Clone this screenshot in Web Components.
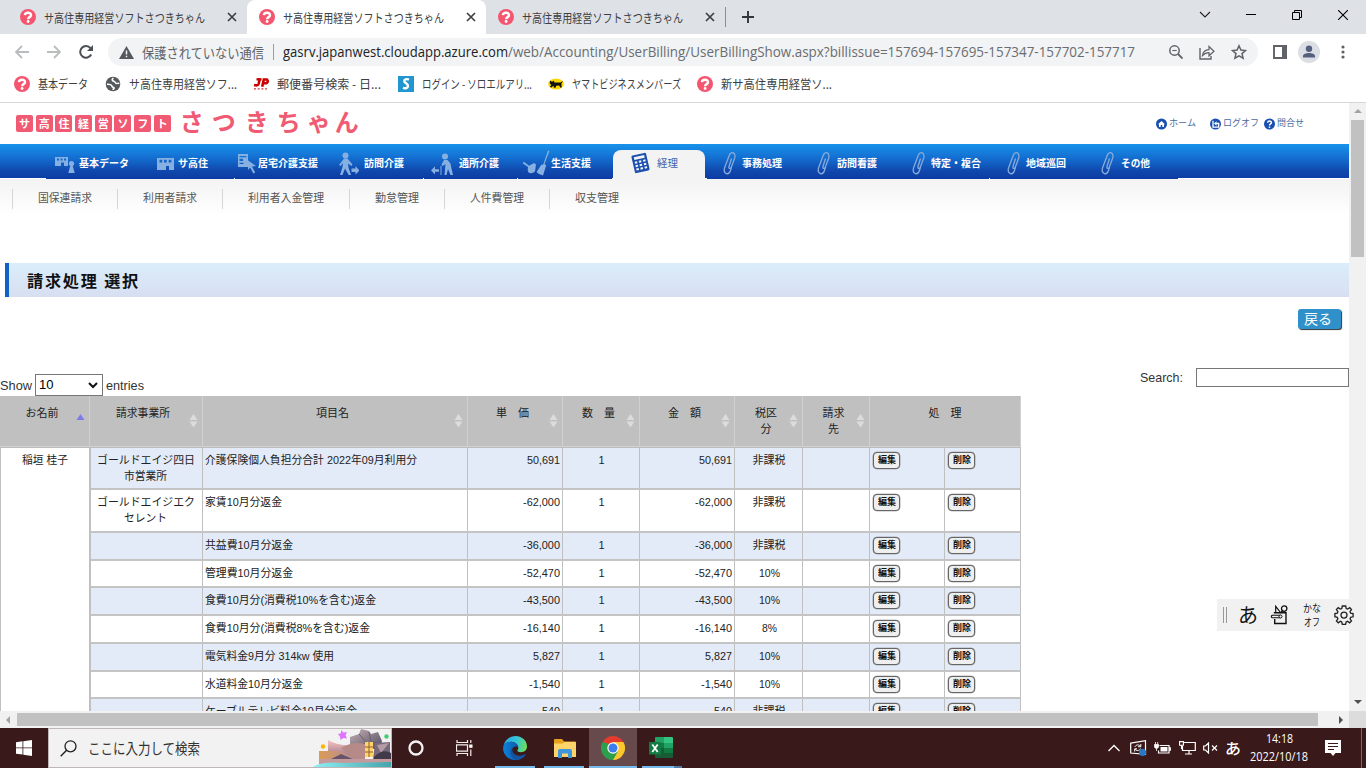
<!DOCTYPE html>
<html lang="ja">
<head>
<meta charset="utf-8">
<title>サ高住専用経営ソフトさつきちゃん</title>
<style>
html,body{margin:0;padding:0;width:1366px;height:768px;overflow:hidden;background:#fff}
body{font-family:"Liberation Sans","Noto Sans CJK JP",sans-serif;font-size:12px;color:#333}
</style>
</head>
<body>
<desktop-screen></desktop-screen>
<script>
const ICONS = {
  fav: ['0 0 16 16', '<circle cx="8" cy="8" r="8" fill="#f4566f"/><path d="M4.900 6.200C5.200 2.700 11.300 3 11 6.400C10.800 8.300 8.100 8 8.100 10.200" fill="none" stroke="#fff" stroke-width="2.400"/><circle cx="8.100" cy="12.500" r="1.400" fill="#fff"/>'],
  close: ['0 0 10 10', '<path d="M1 1l8 8M9 1l-8 8" stroke="#3c4043" stroke-width="1.700" fill="none"/>'],
  plus: ['0 0 12 12', '<path d="M6 0v12M0 6h12" stroke="#333639" stroke-width="1.900"/>'],
  chevdown: ['0 0 12 8', '<path d="M1 1l5 5 5-5" stroke="#222" fill="none" stroke-width="1.100"/>'],
  min: ['0 0 10 10', '<path d="M0 4.500h10" stroke="#000"/>'],
  restore: ['0 0 10 10', '<path d="M.5 2.500h7v7h-7zM2.500 2.500v-2h7v7h-2" stroke="#000" fill="none"/>'],
  winclose: ['0 0 10 10', '<path d="M0 0l10 10M10 0L0 10" stroke="#000" fill="none" stroke-width="1.100"/>'],
  back: ['0 0 14 14', '<path d="M14 7H1.500M7 1L1 7l6 6" stroke="#babcbe" stroke-width="1.800" fill="none"/>'],
  fwd: ['0 0 14 14', '<path d="M0 7h12.500M7 1l6 6-6 6" stroke="#babcbe" stroke-width="1.800" fill="none"/>'],
  reload: ['0 0 14 14', '<path d="M12.200 9.500A5.800 5.800 0 1 1 11.500 3.200" stroke="#4c5054" stroke-width="2" fill="none"/><path d="M14 0v6H8z" fill="#4c5054"/>'],
  warn: ['0 0 15 13', '<path d="M7.500 0L15 13H0z" fill="#55585c"/><path d="M7.500 4.500v4M7.500 9.700v1.600" stroke="#f1f3f4" stroke-width="1.500"/>'],
  zoomout: ['0 0 14 14', '<circle cx="5.500" cy="5.500" r="4.700" fill="none" stroke="#5f6368" stroke-width="1.500"/><path d="M9 9l4.500 4.500" stroke="#5f6368" stroke-width="1.900"/><path d="M3.300 5.500h4.400" stroke="#5f6368" stroke-width="1.100"/>'],
  share: ['0 0 16 15', '<path d="M1 3v11h11v-3" fill="none" stroke="#5f6368" stroke-width="1.400"/><path d="M3.500 10.500C4 6.800 6.500 4.900 10 4.700V1.500l5 4.700-5 4.600V7.700C7 7.700 5.300 8.500 3.500 10.500z" fill="none" stroke="#5f6368" stroke-width="1.200"/>'],
  star: ['0 0 16 16', '<path d="M8 1.800l1.900 4.300 4.600.4-3.500 3.100 1.100 4.600L8 11.800l-4.100 2.400L5 9.600 1.500 6.500l4.600-.4z" fill="none" stroke="#5f6368" stroke-width="1.500"/>'],
  panel: ['0 0 14 14', '<path d="M1 1h12v12H1z" fill="none" stroke="#5f6368" stroke-width="1.900"/><path d="M9 0h5v14H9z" fill="#5f6368"/>'],
  avatar: ['0 0 22 22', '<circle cx="11" cy="11" r="11" fill="#dbdee4"/><circle cx="11" cy="7.800" r="3.200" fill="#55617c"/><path d="M5 16.500v-1.500c0-4 12-4 12 0v1.500z" fill="#55617c"/>'],
  dots: ['0 0 4 14', '<circle cx="2" cy="2" r="1.600" fill="#5f6368"/><circle cx="2" cy="7" r="1.600" fill="#5f6368"/><circle cx="2" cy="12" r="1.600" fill="#5f6368"/>'],
  globe: ['0 0 16 16', '<circle cx="8" cy="8" r="7.300" fill="#55595d"/><path d="M8.500 2.200c-2.500 1-1 3 .8 3.200 1.300.2.500 1.800 1.800 2 1 .2 1.900-.3 3.200 0" fill="none" stroke="#fff" stroke-width="1.500"/><path d="M1.900 8.300c2.500-.1 4.800.3 5 1.900.1 1.300 2.800.6 2 2.600l-1.400.8" fill="none" stroke="#fff" stroke-width="1.600"/>'],
  jp: ['0 0 16 12', '<g fill="none" stroke="#c00" stroke-width="2.600"><path d="M6.800 .8L5.600 6Q5 8 1 7"/><path d="M9.200 8.700l1.600-7.200h3.200q2 2.200-1 3.800h-3"/></g><path d="M3.500 1.300h5" stroke="#c00" stroke-width="2.400"/><path d="M1 10.900h13" stroke="#c00" stroke-dasharray="2 1.700"/>'],
  soro: ['0 0 16 16', '<path d="M0 0h16v16H0z" fill="#2196cf"/><path d="M11 3.700C8.500 2.500 6 3.300 6.300 5.300c.3 1.900 3.800 2.300 3.700 4.600-.1 2-2.500 3-5 2" fill="none" stroke="#fff" stroke-width="2.400"/>'],
  yamato: ['0 0 16 12', '<ellipse cx="8" cy="6" rx="7.800" ry="5.500" fill="#fcd800"/><path d="M2 2.500l1.300 1h1.500l1.200-1 .3 2h6.200l2.500-1.400-1.600 2.700.3 3.700h-1.500l-1-2-3 .2-.7 2H6l-.7-2L3.500 9.500 2 9l1.200-2.300L1.800 5.500z" fill="#111"/>'],
  home: ['0 0 11 12', '<circle cx="5.500" cy="6" r="5.500" fill="#184fb0"/><path d="M2 6.300L5.500 3 9 6.300H8v2.800H6.300V7H4.700v2.100H3V6.300z" fill="#fff"/>'],
  logoff: ['0 0 11 12', '<circle cx="5.500" cy="6" r="5.500" fill="#184fb0"/><path d="M3 2.800v6.400h5.700V5.500H6" stroke="#fff" fill="none" stroke-width="1.300"/><path d="M4 5.500L6.500 3.300v4.400z" fill="#fff"/>'],
  help: ['0 0 11 12', '<circle cx="5.500" cy="6" r="5.500" fill="#184fb0"/><path d="M3.600 4.700c.2-2.200 4-2.100 3.800 0C7.200 6 5.500 6 5.500 7.500" stroke="#fff" fill="none" stroke-width="1.500"/><path d="M5.500 8.500v1.400" stroke="#fff" stroke-width="1.500"/>'],
  n1: ['0 0 20 26', '<path fill-rule="evenodd" d="M0 7h13v9H9v-3.500H6V16H0zM2 8.500v2h2v-2zM5.500 8.500v2h2v-2zM9 8.500v2h2v-2z"/><circle cx="16.500" cy="13.500" r="2.600"/><path d="M15.500 15h2l2.200 8h-6.400z"/>'],
  n2: ['0 0 18 26', '<path fill-rule="evenodd" d="M0 8h17v12h-5v-4H9v4H0zM2.500 9.800v2.700h2.700V9.800zM7 9.800v2.700h2.700V9.800zM11.700 9.800v2.700h2.700V9.800z"/>'],
  n3: ['0 0 18 26', '<path fill-rule="evenodd" d="M0 4h10v13H0zM1.500 6v1.200h7V6zM1.500 8.700v2.300h3.500V8.700zM1.500 12.700v1.200h4v-1.200z"/><path d="M9.500 10l8.500 6-4 .4 3.200 6-1.900 1-3.100-6-2 2.600z"/>'],
  n4: ['0 0 20 26', '<circle cx="6.500" cy="5.500" r="3"/><path d="M5 8.500h3.500l5 6-1 1.500-3.500-2.500.5 4 2.500 7.500h-2.300L6 18.500 3.500 25H1l2.500-8 .3-4L1.500 16 0 15z"/><path d="M12.500 18.500h4V16l4 4.500-4 4V22h-4z"/>'],
  n5: ['0 0 22 26', '<circle cx="14" cy="6.500" r="3"/><path d="M13 10h3.500l3 3.500 1 5 1.500 6.500h-2.500l-2.500-6-1.500 6h-2l1-11-3 2-1-1.200z"/><path d="M10 16V25" stroke-width="1" stroke="#86b0e2"/><path d="M8 19.200H4V16.200L0 20.500l4 4.100v-2.800h4z"/>'],
  n6: ['0 0 27 26', '<path d="M25 .5l1.400.6L21.500 14l1.700 1.200L20 25.500q-4-.5-6.500-3.500l5-7.500 1.600.3z"/><path d="M0 12l1.500.3 4.700 3.400L11 13l2 1.500-1 7q-3.500 3.200-6.700.8Q4.300 19.500 5 17L0 13.500z"/>'],
  calc: ['0 0 19 22', '<g transform="rotate(-13 9.500 11)"><rect x="2" y="2" width="15" height="18" rx="1.500" fill="#1b4fae"/><path d="M4.200 4h10.600v2.800H4.200zM4 8.500h2.500v2H4zM8.200 8.500h2.500v2H8.200zM12.500 8.500H15v2h-2.500zM4 12h2.500v2H4zM8.200 12h2.500v2H8.200zM12.500 12H15v2h-2.500zM4 15.500h2.500v2H4zM8.200 15.500h2.500v2H8.200zM12.500 15.500H15v2h-2.500z" fill="#f3f3f3"/></g>'],
  clip: ['0 0 13 24', '<path d="M8.500 7.500L6 15.500c-.6 2.500 1.800 2.500 2.400.5l3.300-9C13 1 7.500-.5 6 5L1.500 17C0 23.500 6 24.500 7.500 19.500l1-3.500" fill="none" stroke="#86aadc" stroke-width="1.300"/>'],
  winlogo: ['0 0 16 16', '<path d="M0 2.200l6.500-.9v6.200H0zM7.300 1.200L16 0v7.500H7.300zM0 8.300h6.500v6.300L0 13.700zM7.300 8.300H16V16l-8.700-1.200z" fill="#fff"/>'],
  search: ['0 0 17 17', '<circle cx="10.500" cy="6.300" r="5.500" fill="none" stroke="#222" stroke-width="1.300"/><path d="M6.600 10.200L.7 16.200" stroke="#222" stroke-width="1.400"/>'],
  cortana: ['0 0 16 16', '<circle cx="8" cy="8" r="6.500" fill="none" stroke="#f5f0f0" stroke-width="2.300"/>'],
  taskview: ['0 0 17 16', '<path d="M1 0v2.500h10.500V0M1 16v-2.500h10.500V16M.5 4.800h11v6.400H.5z" fill="none" stroke="#f4eeee" stroke-width="1.200"/><path d="M14.800 0v3M14.800 9.500V16" stroke="#f4eeee" stroke-width="1.200"/><path d="M13.200 4.500h3.300v3.300h-3.300z" fill="#fff"/>'],
  edge: ['0 0 24 24', '<defs><linearGradient id="a" x1="0" x2="1" y1=".3" y2=".5"><stop stop-color="#2ba9e8"/><stop offset=".55" stop-color="#35c5d3"/><stop offset="1" stop-color="#6ce05b"/></linearGradient><linearGradient id="b" x1="0" x2="1"><stop stop-color="#0d82dc"/><stop offset="1" stop-color="#0b4695"/></linearGradient></defs><path d="M.5 10C2 3.500 7 0 12.500 0 19.500 0 24 5.200 24 10.500c0 3.500-2.500 5.700-6 5.700-3 0-4.300-1.100-3.300-2.500 2.300-3-1.700-8-6-8-4 0-7 1.800-8.200 4.300z" fill="url(#a)"/><path d="M.5 9.600C2 6.800 5 5.600 8.300 5.700c4 .1 6.600 3.300 6.600 6-.9-2-5.900-1.700-5.900 2.500 0 4.500 5.500 8.300 12.500 4.300.8-.4 1.300.1.800.8C19.700 23 15.500 24.400 11 24 4 23.200-1.300 16.700.5 9.600z" fill="url(#b)"/><path d="M9.600 11.300c-4.700 4.700-1.500 11.200 4.400 12.700 3.500-.3 6.700-2.200 8.500-4.900.3-.6-.2-.9-.8-.6C14.500 22 7.500 17.500 9.600 11.300z" fill="#14539e"/>'],
  folder: ['0 0 22 19', '<path d="M0 1q0-1 1-1h7l2 2.500h11q1 0 1 1V17H0z" fill="#e7a21c"/><path d="M0 4.500h8.500l2-1.500H21q1 0 1 1v14H0z" fill="#fcd469"/><path d="M4 19v-7q0-2 2-2h10q2 0 2 2v7h-4v-4.500H8V19z" fill="#3f96dc"/>'],
  chrome: ['0 0 24 24', '<path d="M12 12L1.600 6A12 12 0 0 1 22.400 6z" fill="#e33b2e"/><path d="M12 12L1.600 6A12 12 0 0 0 12 24l5.200-9z" fill="#2d9e4b"/><path d="M12 12l0 12A12 12 0 0 0 22.400 6H12z" fill="#fcc62d"/><path d="M7.400 15L1.600 6l6.500 2zM17.200 15L12 24l-1-7z" fill="#2d9e4b"/><circle cx="12" cy="12" r="5.700" fill="#fff"/><circle cx="12" cy="12" r="4.500" fill="#3b7ded"/>'],
  excel: ['0 0 24 22', '<path d="M6 1q0-1 1-1h8v6H6z" fill="#21a366"/><path d="M15 0h8q1 0 1 1v5h-9z" fill="#33c481"/><path d="M6 6h9v5H6z" fill="#107c41"/><path d="M15 6h9v5h-9z" fill="#21a366"/><path d="M6 11h9v5H6z" fill="#185c37"/><path d="M15 11h9v5h-9z" fill="#107c41"/><path d="M6 16h18v4q0 1-1 1H7q-1 0-1-1z" fill="#185c37"/><path d="M0 5h12v12.500H0z" fill="#107c41"/><path d="M3.300 7.500l5.400 7.500M8.700 7.500L3.300 15" stroke="#fff" stroke-width="1.800"/>'],
  tup: ['0 0 12 8', '<path d="M.5 7L6 1.500 11.500 7" fill="none" stroke="#fff" stroke-width="1.300"/>'],
  tsync: ['0 0 17 16', '<path d="M.7 3.200L15.500.7v13.600L.7 13z" fill="none" stroke="#fff" stroke-width="1.200"/><path d="M5 7c.5-2.500 4.500-2.800 5.500-.5M10.800 4v2.700H8M10.500 8.500c-.8 2.500-4.500 2.600-5.500.5M4.700 11.500V8.800H7" stroke="#fff" fill="none"/><circle cx="12.600" cy="12.300" r="3.600" fill="#2a77c4"/>'],
  tbat: ['0 0 17 12', '<path d="M5.500 3.500h9.500v7.500H4.500V8.500" fill="none" stroke="#fff" stroke-width="1.200"/><path d="M6.500 5h7v4.500h-7z" fill="#fff"/><path d="M15.500 5.500h1v3h-1zM.5 2.500h4v2.300q0 1.500-2 1.500t-2-1.500zM1.500 0v2.500M3.700 0v2.500M2.500 6v3" fill="#fff" stroke="#fff" stroke-width=".8"/>'],
  tnet: ['0 0 17 14', '<path d="M5 1.500h11.300v8H3.500V5M10 9.500v3.500M6 13h7" fill="none" stroke="#fff" stroke-width="1.200"/><path d="M.6 .6h3.800v3.600H.6zM2.500 4v4" fill="none" stroke="#fff" stroke-width="1.100"/>'],
  tvol: ['0 0 15 12', '<path d="M.7 4h1.800l3-3v10l-3-3H.7z" fill="none" stroke="#fff" stroke-width="1.200"/><path d="M9 3.500l5 5M14 3.500l-5 5" stroke="#fff" stroke-width="1.200"/>'],
  tnote: ['0 0 16 16', '<path d="M0 0h16v13h-5.500L8 16l-2.500-3H0z" fill="#fff"/><path d="M3 3.500h10M3 6.500h10M3 9.500h6" stroke="#3b191b" stroke-width="1.100"/>'],
  pad: ['0 0 18 20', '<path d="M4.700 14v4.500H16V7.700H3.800" fill="none" stroke="#111" stroke-width="1.400"/><path d="M5.700 7.500V1.300l4.800 6.200" fill="none" stroke="#111" stroke-width="1.200"/><circle cx="14.200" cy="3.600" r="2.700" fill="#f0f0f0" stroke="#111" stroke-width="1.300"/><path d="M12.700 5.500L10.500 8" stroke="#111" stroke-width="1.300"/><path d="M10 10.200H2.200q-1.800 1.300 0 2.600H10z" fill="#f0f0f0" stroke="#111" stroke-width="1.100"/><circle cx="10.500" cy="11.500" r="1.500" fill="#f0f0f0" stroke="#111"/>'],
  gear: ['0 0 20 20', '<path d="M8.300 1h3.400l.5 2.500 1.500.6L15.800 2.700l1.700 1.800-1.500 2.200.6 1.500 2.500.4v3.200l-2.500.5-.6 1.500 1.500 2.200-1.900 1.800-2-1.500-1.500.7-.5 2.400H8.300l-.5-2.400-1.500-.7-2 1.500-1.900-1.800 1.500-2.200-.6-1.500L.9 11.700V8.500l2.400-.3.6-1.500-1.500-2.200 1.800-1.800 2.100 1.400 1.500-.6z" fill="none" stroke="#222" stroke-width="1.300"/><circle cx="10" cy="10.100" r="3" fill="none" stroke="#222" stroke-width="1.300"/>'],
  art: ['0 0 78 38', '<defs><linearGradient id="s" x1="0" x2="0" y1="0" y2="1"><stop stop-color="#f6c4c2"/><stop offset="1" stop-color="#8f687c"/></linearGradient><linearGradient id="g" x1="0" x2="1" y1="0" y2="1"><stop stop-color="#c5b0b4"/><stop offset="1" stop-color="#4f4a5e"/></linearGradient><linearGradient id="o" x1="0" x2="1"><stop stop-color="#dc9b55"/><stop offset="1" stop-color="#ad8ba3"/></linearGradient><linearGradient id="w" x1="0" x2="1"><stop stop-color="#8deff4"/><stop offset="1" stop-color="#46a5ac"/></linearGradient></defs><path d="M15 11q10 6 22 5l15 3v12H15z" fill="url(#s)"/><path d="M37 8l9-3 2-5 8 2 2 3 7-2 4 9-2 9-30-5z" fill="url(#g)"/><path d="M46 5l7 8-8 6M56 3l2 10 8 1" fill="none" stroke="#675f70"/><path d="M62 14l15-1v17H60z" fill="#77687b"/><path d="M64 16l12-2-8 10z" fill="#b49ba5"/><path d="M6 22h21l20 9H6z" fill="url(#o)"/><path d="M28 19q12-7 24-4v16H43z" fill="#b58a89"/><path d="M18 30l10-5 14 6H18z" fill="#67546b"/><path d="M52 13h8v15h-8z" fill="#ffd56b"/><path d="M56 13v15M52 18h8M52 23h8" stroke="#915f2e"/><path d="M61 28q9-9 17-4v7H61z" fill="#403a4b"/><path d="M6 30h72v5H6z" fill="#c49a9d"/><path d="M0 38q8-6 30-4l48-1v5z" fill="url(#w)"/><path d="M28 1l2.500 2.500L34 3l-1.500 3.200L34 9.500 30.500 9 27.500 11 27 7.500 25 5l3-.8z" fill="#df72ff"/><circle cx="10" cy="17.500" r="2.200" fill="#ffb400"/><circle cx="73.500" cy="7.500" r="2.200" fill="#42ce6c"/>'],
};

class Base extends HTMLElement {
  connectedCallback() {
    if (!this.shadowRoot) {
      this.attachShadow({mode: 'open'}).innerHTML = '<style>*{box-sizing:border-box}' + this.css() + '</style>' + this.html();
    }
    if (this.ready) this.ready();
  }
  css() { return ':host{display:block}'; }
  html() { return '<slot></slot>'; }
  a(name, fallback = '') { return this.getAttribute(name) ?? fallback; }
}
const def = (n, c) => customElements.define(n, c);

/* vector icon: name, width, height */
def('x-icon', class extends Base {
  css() { return `:host{display:block;flex:none;width:${this.a('w')}px;height:${this.a('h')}px;fill:#86b0e2}svg{display:block}`; }
  html() {
    const [vb, body] = ICONS[this.a('name')];
    return `<svg width="${this.a('w')}" height="${this.a('h')}" viewBox="${vb}">${body}</svg>`;
  }
});

/* one line of text condensed or expanded to a given width */
def('x-t', class extends Base {
  css() { return `:host{display:block;flex:none;white-space:nowrap;width:${this.a('w')}px}span{display:inline-block;transform-origin:0 50%;white-space:pre}`; }
  html() { return '<span><slot></slot></span>'; }
  ready() { this.fit(); addEventListener('load', () => this.fit()); }
  fit() {
    const s = this.shadowRoot.querySelector('span');
    s.style.transform = 'none';
    const n = s.getBoundingClientRect().width;
    if (n) s.style.transform = `scaleX(${this.a('w') / n})`;
  }
});

def('browser-tab', class extends Base {
  css() { return `:host{display:flex;align-items:center;height:34px;width:239px;flex:none;padding:0 10px 0 12px;font:12.5px "Noto Sans CJK JP",sans-serif;color:#3c4043;position:relative}
    :host([active]){background:#fff;border-radius:8px 8px 0 0}
    x-t{margin:0 22px 0 8px}`; }
  html() { return `<x-icon name="fav" w="16" h="16"></x-icon><x-t w="161"><slot></slot></x-t><x-icon name="close" w="10" h="10"></x-icon>`; }
});

def('tab-strip', class extends Base {
  css() { return `:host{display:flex;align-items:center;height:34px;background:#dee1e6;padding-left:8px}
    .sep{width:1px;height:20px;background:#8a8d91;margin-right:16px}
    .c{margin-left:auto;display:flex}
    .c div{width:46px;height:30px;display:flex;align-items:center;justify-content:center}`; }
  html() {
    const t = 'サ高住専用経営ソフトさつきちゃん';
    return `<browser-tab>${t}</browser-tab><browser-tab active>${t}</browser-tab><browser-tab>${t}</browser-tab><span class="sep"></span><x-icon name="plus" w="12" h="12"></x-icon>
    <span class="c">${[['chevdown',12,8],['min',10,10],['restore',10,10],['winclose',10,10]].map(i => `<div><x-icon name="${i[0]}" w="${i[1]}" h="${i[2]}" style="margin-top:-5px"></x-icon></div>`).join('')}</span>`;
  }
});

def('tool-bar', class extends Base {
  css() { return `:host{display:flex;align-items:center;height:36px;background:#fff;padding:0 20px 0 15px}
    .n{display:flex;gap:18px;width:93px;flex:none}
    .o{display:flex;align-items:center;width:1150px;height:28px;background:#f1f3f4;border-radius:14px;padding:0 11px 0 11px;flex:none;font:14.5px/28px "Open Sans","Noto Sans CJK JP",sans-serif;color:#6a6d71}
    .s{width:1px;height:16px;background:#9a9da1;margin:0 9px}
    .o b{font-weight:400;color:#202124}
    .jp{margin-left:8px;color:#5f6368;font:14px/28px "Noto Sans CJK JP",sans-serif}
    .i{display:flex;gap:16px;margin-left:auto;align-items:center}
    .r{display:flex;align-items:center;gap:11px;margin-left:15px}
    .r :last-child{margin-left:10px;margin-right:-2px}`; }
  html() { return `<div class="n"><x-icon name="back" w="14" h="14"></x-icon><x-icon name="fwd" w="14" h="14"></x-icon><x-icon name="reload" w="14" h="14"></x-icon></div>
    <div class="o"><x-icon name="warn" w="15" h="13"></x-icon><x-t class="jp" w="122">保護されていない通信</x-t><span class="s"></span><x-t w="225"><b>gasrv.japanwest.cloudapp.azure.com</b></x-t><x-t w="627">/web/Accounting/UserBilling/UserBillingShow.aspx?billissue=157694-157695-157347-157702-157717</x-t>
    <span class="i"><x-icon name="zoomout" w="14" h="14"></x-icon><x-icon name="share" w="16" h="15"></x-icon><x-icon name="star" w="16" h="16"></x-icon></span></div>
    <div class="r"><x-icon name="panel" w="14" h="14"></x-icon><x-icon name="avatar" w="22" h="22"></x-icon><x-icon name="dots" w="4" h="14"></x-icon></div>`; }
});

def('bookmark-bar', class extends Base {
  css() { return `:host{display:flex;align-items:center;height:33px;background:#fff;padding:0 0 4px 14px;border-bottom:1px solid #d5d7da;font:12px/18px "Noto Sans CJK JP",sans-serif;color:#3c4043}
    x-t{margin-left:8px}`; }
  html() {
    return [['fav',16,'基本データ',50,17],['globe',16,'サ高住専用経営ソフ...',108,16],['jp',12,'郵便番号検索 - 日...',104,17],['soro',16,'ログイン - ソロエルアリ...',110,16],['yamato',12,'ヤマトビジネスメンバーズ',109,16],['fav',16,'新サ高住専用経営ソ...',111,0]]
      .map(b => `<x-icon name="${b[0]}" w="16" h="${b[1]}"></x-icon><x-t w="${b[3]}" style="margin-right:${b[4]}px">${b[2]}</x-t>`).join('');
  }
});

def('site-header', class extends Base {
  css() { return `:host{display:flex;height:41px;background:#fff;padding:12px 0 0 16px;font-family:"Noto Sans CJK JP",sans-serif}
    .sq{display:flex;gap:2.7px}
    .sq span{width:17px;height:17px;border-radius:2px;background:#f05a72;color:#fff;font:bold 11px/16px "Noto Sans CJK JP",sans-serif;text-align:center}
    .nm{display:flex;margin:-7px 0 0 5px;color:#f05a72;font:bold 24px/26px "Noto Sans CJK JP",sans-serif;height:26px}
    .nm span{flex:none;text-align:center}
    .l{display:flex;margin:0 45px 0 auto;font-size:9px;line-height:13px;color:#4b6b9c}
    .l x-icon{margin-top:2.500px}.l x-t{margin:1px 0 0 2px}`; }
  html() { return `<div class="sq">${[...'サ高住経営ソフト'].map(c => `<span>${c}</span>`).join('')}</div><div class="nm">${[['さ',32],['つ',32],['き',34],['ち',30],['ゃ',30],['ん',26]].map(c => `<span style="width:${c[1]}px">${c[0]}</span>`).join('')}</div>
    <div class="l"><x-icon name="home" w="11" h="12"></x-icon><x-t w="27" style="margin-right:14px">ホーム</x-t><x-icon name="logoff" w="11" h="12"></x-icon><x-t w="36" style="margin-right:5px">ログオフ</x-t><x-icon name="help" w="11" h="12"></x-icon><x-t w="27">問合せ</x-t></div>`; }
});

def('main-nav', class extends Base {
  css() { return `:host{display:flex;height:35px;background:linear-gradient(#1793eb,#146fd1 40%,#0f47ad 80%,#0d3da4) 0 0/100% 34px no-repeat #fff;padding-left:46px;font:bold 10.500px/16px "Noto Sans CJK JP",sans-serif;color:#fff}
    .i{width:94.380px;flex:none;display:flex;align-items:center;position:relative;border-bottom:1px solid #0d3da4}
    .i:not(.on)::after{content:"";position:absolute;right:-1px;bottom:-1px;width:1.500px;height:1px;background:#fff}
    .i x-t{margin-top:3px}.i x-icon{margin-top:3px}
    .on{border-color:transparent;font-weight:400;color:#3d62ab}
    .on::before{content:"";position:absolute;left:1px;top:6px;width:92px;height:29px;background:#f3f3f3;border-radius:8px 8px 0 0}
    .on>*{position:relative}`; }
  html() {
    const d = [['基本データ',79,50,'n1',55,20,26],['サ高住',178,30,'n2',157,18,26],['居宅介護支援',258,60,'n3',238,18,26],['訪問介護',364,40,'n4',339,20,26],['通所介護',459,40,'n5',431,22,26],['生活支援',551,40,'n6',523,27,26],['経理',657,21,'calc',631,19,22],['事務処理',742,40,'clip',723,13,24],['訪問看護',837,40,'clip',817,13,24],['特定・複合',931,50,'clip',912,13,24],['地域巡回',1026,40,'clip',1007,13,24],['その他',1121,29,'clip',1101,13,24]];
    return d.map((n, k) => {
      const x = 46 + k * 94.38;
      return `<div class="i${n[3] === 'calc' ? ' on' : ''}"><x-icon name="${n[3]}" w="${n[5]}" h="${n[6]}" style="margin-left:${(n[4] - x).toFixed(1)}px"></x-icon><x-t w="${n[2]}" style="margin-left:${n[1] - n[4] - n[5]}px">${n[0]}</x-t></div>`;
    }).join('');
  }
});

def('sub-nav', class extends Base {
  css() { return `:host{display:flex;height:36px;padding:10px 0 0 12px;background:linear-gradient(#f3f3f3,#fff);font:11px/16px "Noto Sans CJK JP",sans-serif;color:#555}
    div{border-left:1px solid #d6d6d6;height:20px;padding:0 25px}`; }
  html() { return [['国保連請求',54],['利用者請求',54],['利用者入金管理',76],['勤怠管理',44],['人件費管理',54],['収支管理',44]].map(i => `<div><x-t w="${i[1]}">${i[0]}</x-t></div>`).join(''); }
});

def('page-title', class extends Base {
  css() { return `:host{display:flex;align-items:center;height:34px;margin:48px 0 0 5px;border-left:4px solid #1063c6;padding:0 0 1px 18px;background:linear-gradient(#dbedfb,#d7dff1);font:bold 16px/24px "Noto Sans CJK JP",sans-serif;color:#111}
    x-t{letter-spacing:1.800px}`; }
  html() { return '<x-t w="113"><slot></slot></x-t>'; }
});

def('back-button', class extends Base {
  css() { return `:host{display:flex;justify-content:flex-end;padding:12px 8px 0 0}
    button{width:43px;height:20px;border:0;border-radius:3px;background:#3091ca;box-shadow:1px 1px 1px #333;color:#fff;padding:0 0 2px 6px;font:14px/18px "Noto Sans CJK JP",sans-serif;text-align:left}`; }
  html() { return '<button><x-t w="28"><slot></slot></x-t></button>'; }
});

def('table-controls', class extends Base {
  css() { return `:host{display:flex;height:67px;font:13px/16px "Liberation Sans",sans-serif;color:#333}
    .l{display:flex;align-items:flex-end}.l x-t{margin-bottom:2px}
    .sel{width:68px;height:22px;border:1px solid #767676;margin:0 3px 0 3px;padding:2px 4px 2px 3px;display:flex;justify-content:space-between;align-items:center;color:#000;background:#fff}
    svg{display:block}
    .r{margin:39px 0 0 auto;display:flex}
    .r x-t{margin-top:2px}
    input{width:153px;height:19px;border:1px solid #767676;margin:0 0 0 13px;padding:0;background:#fff}`; }
  html() { return `<div class="l"><x-t w="32">Show</x-t><div class="sel">10<svg width="10" height="7" viewBox="0 0 10 7"><path d="M1 1l4 4 4-4" fill="none" stroke="#111" stroke-width="2"/></svg></div><x-t w="38">entries</x-t></div>
    <div class="r"><x-t w="43">Search:</x-t><input></div>`; }
});

def('billing-table', class extends Base {
  css() { return `:host{display:block;width:1021px;color:#222;font:11px/16px "Liberation Sans","Noto Sans CJK JP",sans-serif}
    .h{display:grid;grid-template-columns:90px 113px 265px 95px 77px 95px 68px 67px 151px;height:52px;background:#c0c0c0;border-bottom:1px solid #bdbdbd;box-shadow:inset 0 -1px #d2d2d2}
    .h>div{border-right:1px solid #d0d0d0;padding:9px 5px 0 0;display:flex;flex-direction:column;align-items:center;position:relative}
    .h>div:nth-child(2){padding-right:7px}
    .h>div:last-child{padding-right:0}
    .h svg{position:absolute;right:4px;top:18px}
    .b{display:grid;grid-template-columns:91px 930px}
    .n{border-left:1px solid #c0c0c0;border-right:2px solid #c0c0c0;padding:4px 0 0 0;display:flex;justify-content:center}
    .r{display:grid;grid-template-columns:112px 265px 95px 77px 95px 68px 67px 75px 76px;border-bottom:2px solid #c4c4c4;background:#fff}
    .r.e{background:#e3ebf8}
    .r>div{border-right:1px solid #c0c0c0;padding:4px 2px 0 3px;display:flex;flex-direction:column;align-items:flex-start;min-width:0}
    .r>div:nth-child(2){padding-left:2px}
    .r>.c{align-items:center}.r>.m{align-items:flex-end}
    .r>.c:first-child{padding:4px 3px 0 1px}
    .bt{width:27px;height:17px;border:1px solid #666;border-radius:4px;background:#efefef;color:#111;font:bold 9px/14px "Noto Sans CJK JP",sans-serif;padding:0 0 0 3.500px;box-shadow:0 0 0 .3px #777}`; }
  html() {
    const up = (c, t) => `<svg width="9" height="14" viewBox="0 0 9 14"><path d="M4.500 0L8.500 6H.5z" fill="${c}"/>${t ? '<path d="M.5 7.500h8L4.500 13.500z" fill="#dcdcdc"/>' : ''}</svg>`;
    const head = [[['お名前',33]],[['請求事業所',54]],[['項目名',33]],[['単　価',33]],[['数　量',33]],[['金　額',33]],[['税区',22],['分',11]],[['請求',22],['先',11]],[['処　理',33]]];
    const rows = [
      [42,[['ゴールドエイジ四日',98],['市営業所',43]],['介護保険個人負担分合計 2022年09月利用分',212],'50,691','非課税'],
      [43,[['ゴールドエイジエク',98],['セレント',43]],['家賃10月分返金',77],'-62,000','非課税'],
      [28,[],['共益費10月分返金',88],'-36,000','非課税'],
      [27,[],['管理費10月分返金',88],'-52,470','10%'],
      [28,[],['食費10月分(消費税10%を含む)返金',171],'-43,500','10%'],
      [28,[],['食費10月分(消費税8%を含む)返金',165],'-16,140','8%'],
      [28,[],['電気料金9月分 314kw 使用',129],'5,827','10%'],
      [27,[],['水道料金10月分返金',98],'-1,540','10%'],
      [28,[],['ケーブルテレビ料金10月分返金',152],'540','非課税']];
    const t = (s, w) => `<x-t w="${w}">${s}</x-t>`;
    const mw = s => s === '-1,540' ? 31 : ({6: 33, 7: 37, 5: 27, 3: 18})[s.length];
    return `<div class="h">${head.map((h, k) => `<div>${h.map(l => t(...l)).join('')}${k === 8 ? '' : up(k ? '#dcdcdc' : '#7c7ce8', k)}</div>`).join('')}</div>
      <div class="b"><div class="n">${t('稲垣 桂子', 46)}</div><div>${rows.map((r, k) => `<div class="r${k % 2 ? '' : ' e'}" style="height:${r[0]}px"><div class="c">${r[1].map(l => t(...l)).join('')}</div><div>${t(...r[2])}</div><div class="m">${t(r[3], mw(r[3]))}</div><div class="c">1</div><div class="m">${t(r[3], mw(r[3]))}</div><div class="c">${t(r[4], {'非課税': 33, '10%': 21, '8%': 15}[r[4]])}</div><div></div><div><div class="bt">${t('編集', 18)}</div></div><div><div class="bt">${t('削除', 18)}</div></div></div>`).join('')}</div></div>`;
  }
});

def('scroll-v', class extends Base {
  css() { return `:host{display:flex;flex-direction:column;align-items:center;width:17px;background:#f1f1f1}
    i{width:13px;height:137px;background:#c1c1c1;margin-top:7px}
    .u{border:4px solid transparent;border-top:0;border-bottom:4px solid #a3a3a3;margin-top:6px}
    .d{border:4px solid transparent;border-bottom:0;border-top:4px solid #505050;margin:auto 0 7px}`; }
  html() { return '<span class="u"></span><i></i><span class="d"></span>'; }
});

def('scroll-h', class extends Base {
  css() { return `:host{display:flex;align-items:center;height:17px;background:#f1f1f1}
    i{width:1301px;height:13px;background:#c1c1c1;margin-left:7px}
    .u{border:4px solid transparent;border-left:0;border-right:4px solid #a3a3a3;margin-left:6px}
    .d{border:4px solid transparent;border-right:0;border-left:4px solid #505050;margin-left:21px}
    b{width:17px;height:17px;background:#dcdcdc;margin-left:auto}`; }
  html() { return '<span class="u"></span><i></i><span class="d"></span><b></b>'; }
});

def('ime-bar', class extends Base {
  css() { return `:host{display:flex;align-items:center;position:absolute;left:1217px;top:599px;width:143px;height:32px;background:#f1f1f1;padding-left:6px;color:#111;font-family:"Noto Sans CJK JP",sans-serif}
    .g{width:4px;height:16px;border:1px solid #999;border-width:0 1px;margin-right:11px;flex:none}
    .a{font-size:20px;line-height:30px;margin-right:12px}
    .k{font-size:10px;line-height:14px;margin:0 13px 0 15px;display:flex;flex-direction:column;align-items:center}`; }
  html() { return `<span class="g"></span><x-t class="a" w="20">あ</x-t><x-icon name="pad" w="18" h="20"></x-icon><span class="k"><x-t w="18">かな</x-t><x-t w="16">オフ</x-t></span><x-icon name="gear" w="20" h="20"></x-icon>`; }
});

def('task-app', class extends Base {
  css() { return `:host{display:flex;flex:none;align-items:center;justify-content:center;width:${this.a('width', 48)}px;height:40px;position:relative}
    :host([on]){background:#674b4c}
    i{position:absolute;bottom:0;left:${this.a('l', 4)}px;width:${this.a('u', 0)}px;height:2px;background:#76b9ed}
    :host([multi]) i{border-right:8px solid #4e7ea8}`; }
  html() { return `<x-icon name="${this.a('icon')}" w="${this.a('w')}" h="${this.a('h')}"></x-icon><i></i>`; }
});

def('task-bar', class extends Base {
  css() { return `:host{display:flex;align-items:center;height:40px;background:#3a191a;color:#fff}
    .s{width:344px;height:40px;background:#f2f2f2;border:1px solid #bdb7b7;display:flex;align-items:center;padding-left:11px;color:#333;font:15px/24px "Noto Sans CJK JP",sans-serif;flex:none}
    .s x-t{margin-left:11px}.s .art{margin-left:auto}
    .t{display:flex;align-items:center;margin-left:auto;font:500 15px/24px "Noto Sans CJK JP",sans-serif}
    .ck{width:60px;display:flex;flex-direction:column;align-items:center;font:12px/18px "Open Sans",sans-serif;margin:0 16px 0 8px}
    .e{width:1px;height:40px;background:#7d6768;margin:0 4px 0 20px}`; }
  html() { return `<task-app icon="winlogo" w="16" h="16"></task-app>
    <div class="s"><x-icon name="search" w="17" h="17"></x-icon><x-t w="112">ここに入力して検索</x-t><x-icon class="art" name="art" w="78" h="38"></x-icon></div>
    <task-app icon="cortana" w="16" h="16"></task-app><task-app icon="taskview" w="17" h="16"></task-app>
    <task-app icon="edge" w="24" h="24" width="53" l="7" u="40"></task-app><task-app icon="folder" w="22" h="19" width="48" l="3" u="40"></task-app>
    <task-app on icon="chrome" w="24" h="24" l="0" u="48"></task-app><task-app icon="excel" w="24" h="22" l="5" u="40" multi></task-app>
    <div class="t"><x-icon name="tup" w="12" h="8" style="margin-right:10px"></x-icon><x-icon name="tsync" w="17" h="16" style="margin-right:7px"></x-icon><x-icon name="tbat" w="17" h="12" style="margin-right:8px"></x-icon><x-icon name="tnet" w="17" h="14" style="margin-right:7px"></x-icon><x-icon name="tvol" w="15" h="12" style="margin-right:7px"></x-icon><x-t w="16">あ</x-t>
    <div class="ck"><x-t w="27">14:18</x-t><x-t w="58">2022/10/18</x-t></div><x-icon name="tnote" w="16" h="16"></x-icon><span class="e"></span></div>`; }
});

def('web-page', class extends Base {
  css() { return `:host{display:block;width:1349px;height:608px;overflow:hidden;background:#fff}`; }
  html() { return `<site-header></site-header><main-nav></main-nav><sub-nav></sub-nav><page-title>請求処理 選択</page-title><back-button>戻る</back-button><table-controls></table-controls><billing-table></billing-table>`; }
});

def('desktop-screen', class extends Base {
  css() { return `:host{display:flex;flex-direction:column;width:1366px;height:768px;overflow:hidden;position:relative;background:#fff}
    .v{display:flex;height:608px;flex:none}`; }
  html() { return `<tab-strip></tab-strip><tool-bar></tool-bar><bookmark-bar></bookmark-bar><div class="v"><web-page></web-page><scroll-v></scroll-v></div><scroll-h></scroll-h><task-bar></task-bar><ime-bar></ime-bar>`; }
});
</script>
</body>
</html>
